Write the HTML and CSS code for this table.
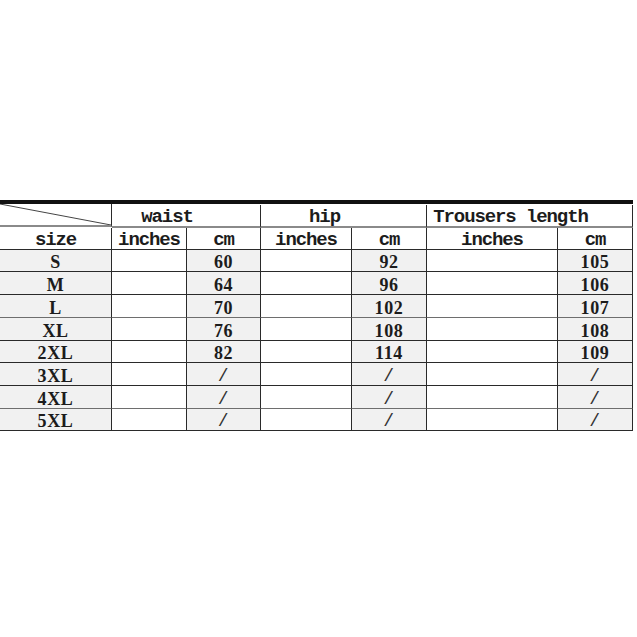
FILE: index.html
```html
<!DOCTYPE html>
<html>
<head>
<meta charset="utf-8">
<link rel="stylesheet" href="styles.css">
</head>
<body>
<div class="sheet">
  <div class="grid">
    <div class="c r1 diag"><svg class="slash" preserveAspectRatio="none" viewBox="0 0 111 21"><line x1="0" y1="0" x2="111" y2="21" stroke="#444" stroke-width="1" vector-effect="non-scaling-stroke"/></svg></div>
    <div class="c r1 span2 grp mono">waist</div>
    <div class="c r1 span2 grp mono">hip</div>
    <div class="c r1 span2 grp mono">Trousers length</div>

    <div class="c r2 mono">size</div>
    <div class="c r2 mono">inches</div>
    <div class="c r2 mono">cm</div>
    <div class="c r2 mono">inches</div>
    <div class="c r2 mono">cm</div>
    <div class="c r2 mono">inches</div>
    <div class="c r2 mono">cm</div>

    <div class="c g num">S</div><div class="c w"></div><div class="c g num">60</div><div class="c w"></div><div class="c g num">92</div><div class="c w"></div><div class="c g num">105</div>
    <div class="c g num">M</div><div class="c w"></div><div class="c g num">64</div><div class="c w"></div><div class="c g num">96</div><div class="c w"></div><div class="c g num">106</div>
    <div class="c g num lite">L</div><div class="c w lite"></div><div class="c g num lite">70</div><div class="c w lite"></div><div class="c g num lite">102</div><div class="c w lite"></div><div class="c g num lite">107</div>
    <div class="c g num">XL</div><div class="c w"></div><div class="c g num">76</div><div class="c w"></div><div class="c g num">108</div><div class="c w"></div><div class="c g num">108</div>
    <div class="c g num">2XL</div><div class="c w"></div><div class="c g num">82</div><div class="c w"></div><div class="c g num">114</div><div class="c w"></div><div class="c g num">109</div>
    <div class="c g num">3XL</div><div class="c w"></div><div class="c g num sl">/</div><div class="c w"></div><div class="c g num sl">/</div><div class="c w"></div><div class="c g num sl">/</div>
    <div class="c g num lite">4XL</div><div class="c w lite"></div><div class="c g num sl lite">/</div><div class="c w lite"></div><div class="c g num sl lite">/</div><div class="c w lite"></div><div class="c g num sl lite">/</div>
    <div class="c g num">5XL</div><div class="c w"></div><div class="c g num sl">/</div><div class="c w"></div><div class="c g num sl">/</div><div class="c w"></div><div class="c g num sl">/</div>
  </div>
</div>
</body>
</html>
```

FILE: styles.css
```css
html, body {
  margin: 0;
  padding: 0;
  background: #ffffff;
}

.sheet {
  padding-top: 200px;
  width: 637px;
}

.grid {
  border-top: 4px solid #111;
  width: 633px;
  display: grid;
  grid-template-columns: 112px 75px 74px 91px 75px 131px 75px;
  grid-template-rows: 23px 22px 23px 23px 23px 23px 22px 23px 23px 22px;
  color: #1c1c1c;
}

.c {
  box-sizing: border-box;
  border-right: 1px solid #2a2a2a;
  border-bottom: 1px solid #2a2a2a;
  display: flex;
  align-items: flex-end;
  justify-content: center;
  line-height: 18px;
}

.r1 {
  background: #fff;
  border-bottom: 2px solid #8a8a8a;
}

.r2 {
  background: #fff;
}

.span2 {
  grid-column: span 2;
}

.grp {
  padding-right: 38px;
}

.diag {
  overflow: hidden;
  padding: 0;
}

.slash {
  display: block;
  width: 111px;
  height: 21px;
}

.mono {
  font-family: "Liberation Mono", "DejaVu Sans Mono", monospace;
  font-weight: bold;
  font-size: 19px;
  letter-spacing: -1.1px;
  line-height: 18px;
  padding-bottom: 0;
  margin-bottom: 0;
}

.mono {
  transform: translateY(1px);
}

.num {
  font-family: "Liberation Serif", "DejaVu Serif", serif;
  font-weight: bold;
  font-size: 18px;
  letter-spacing: 0.6px;
}

.sl {
  font-family: "Liberation Mono", monospace;
  font-weight: normal;
  color: #333;
}

.g {
  background: #f1f1f1;
}

.w {
  background: #fff;
}

.lite {
  border-bottom-color: #6e6e6e;
}
```
